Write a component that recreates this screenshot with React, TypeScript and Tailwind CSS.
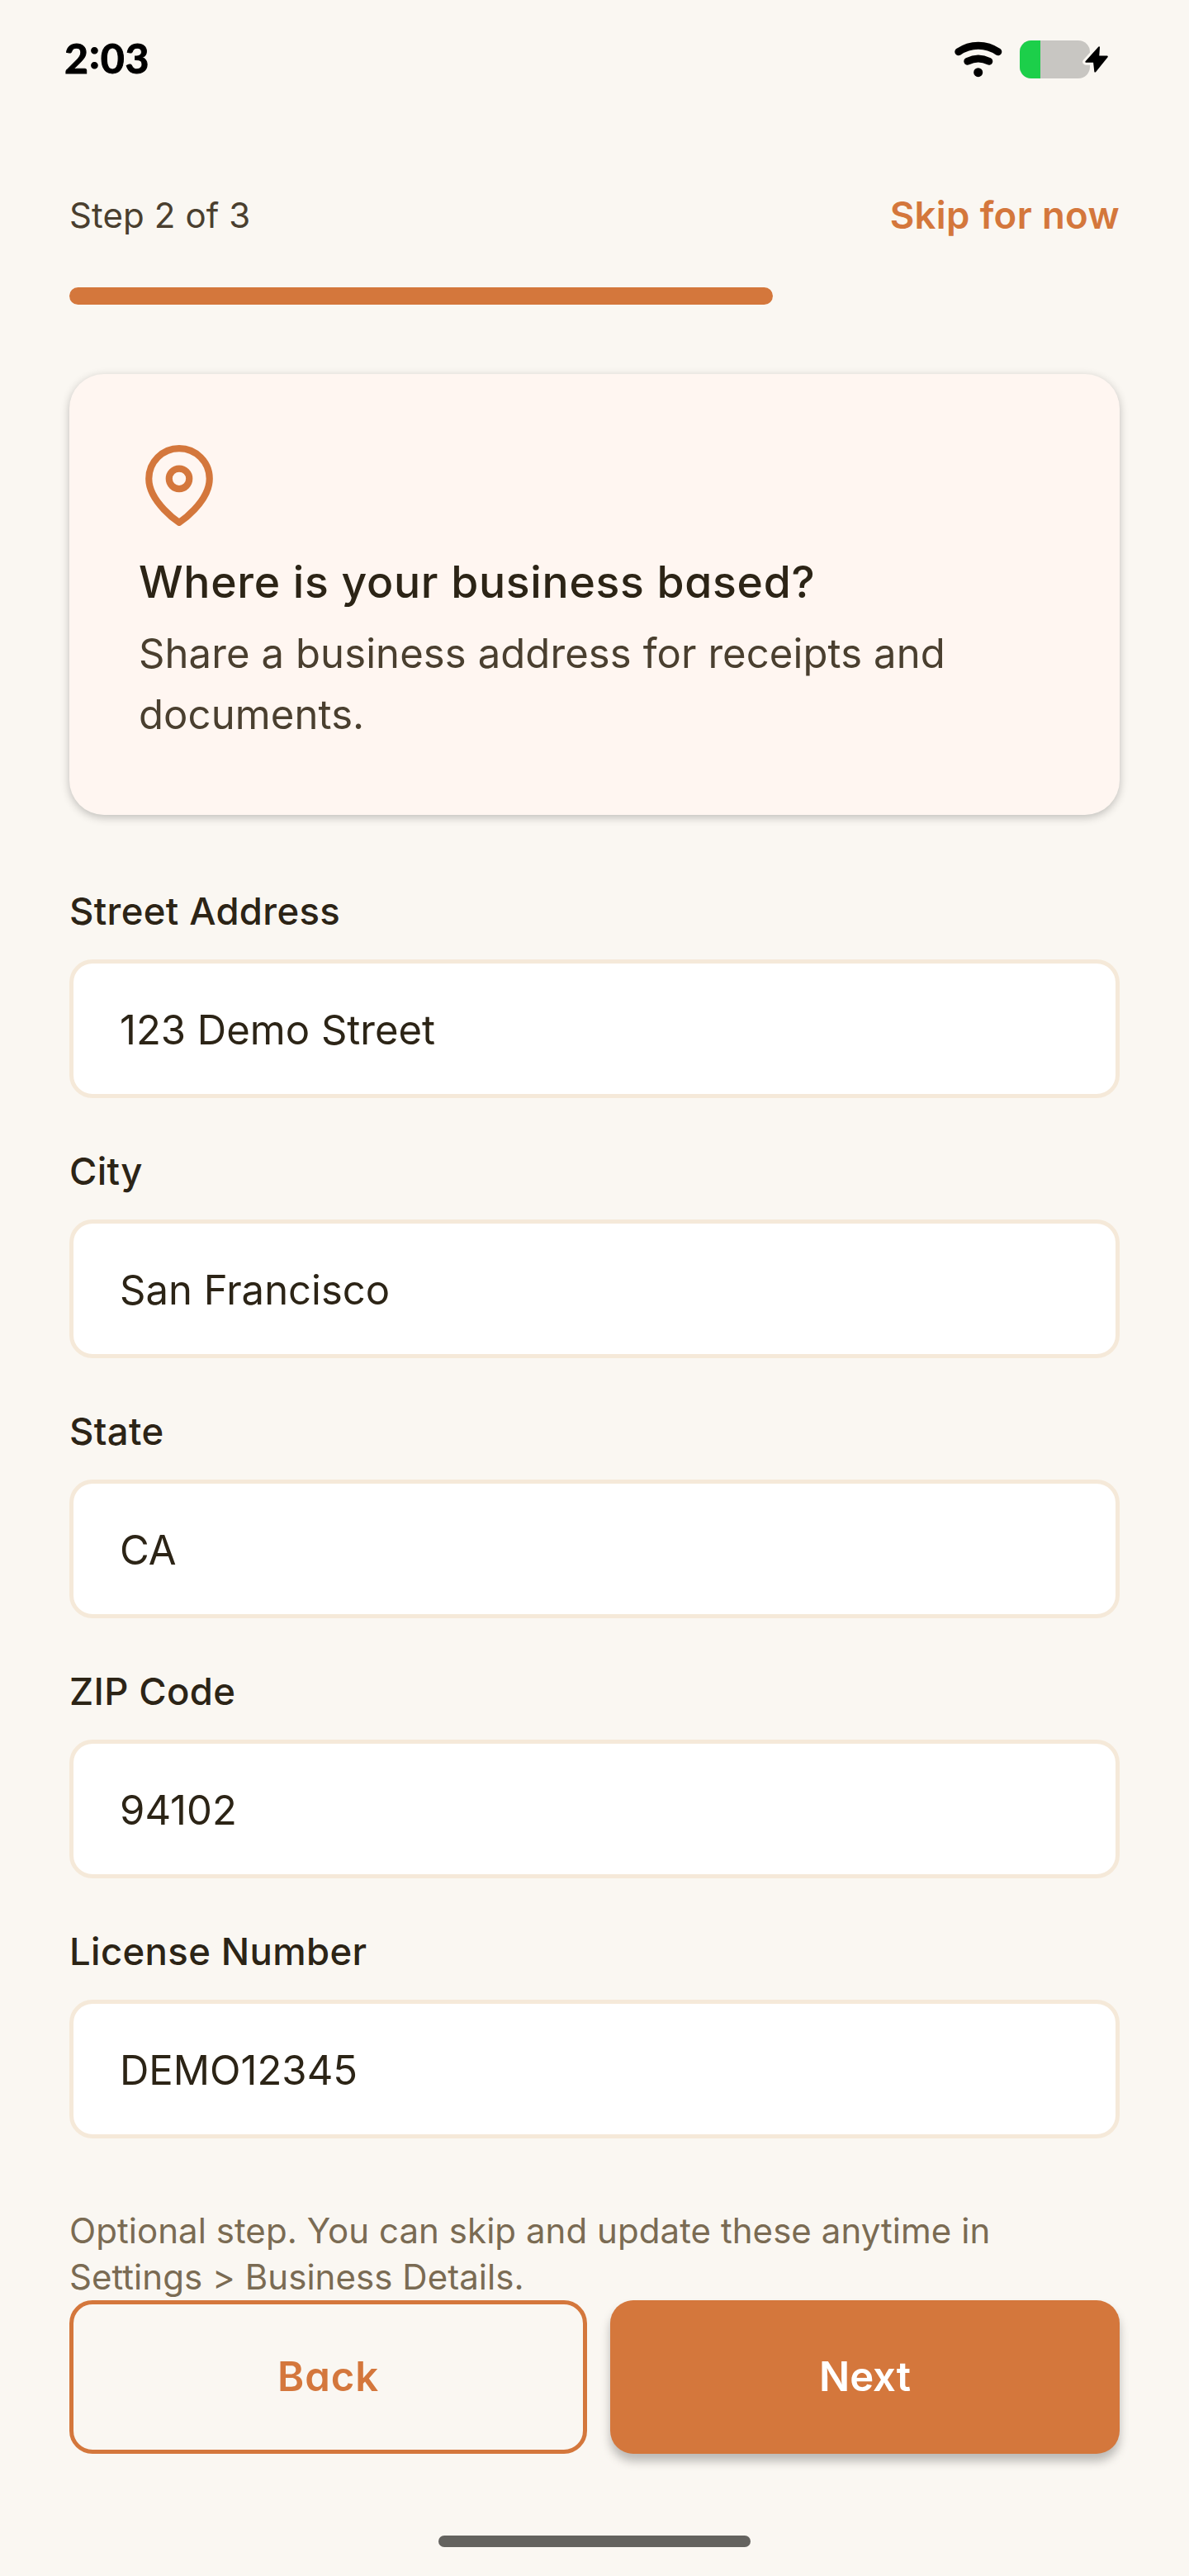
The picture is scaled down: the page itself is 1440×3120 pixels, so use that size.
import { useState } from "react";

const FIELDS = [
  { id: "street", label: "Street Address", value: "123 Demo Street" },
  { id: "city", label: "City", value: "San Francisco" },
  { id: "state", label: "State", value: "CA" },
  { id: "zip", label: "ZIP Code", value: "94102" },
  { id: "license", label: "License Number", value: "DEMO12345" },
];

const BOLT = "M96 8.3L80.3 25.8H90L91.3 37.6L105.8 19.6H95.2Z";

function WifiIcon() {
  return (
    <svg width="58" height="44" viewBox="0 0 58 44" fill="none" stroke="#000" strokeLinecap="round">
      <path d="M4.8 12.8C19.3 2.7 38.3 2.7 52.8 12.8" strokeWidth="9" />
      <path d="M15.8 24.2C24.3 20 33.3 20 41.8 24.2" strokeWidth="9" />
      <circle cx="28.7" cy="37.7" r="5.5" fill="#000" stroke="none" />
    </svg>
  );
}

function BatteryIcon() {
  return (
    <svg width="110" height="46" viewBox="0 0 110 46">
      <rect width="85" height="46" rx="14" fill="#c8c6c2" />
      <path d="M14 0H25V46H14a14 14 0 0 1-14-14V14a14 14 0 0 1 14-14z" fill="#1ccf4a" />
      {/* gap between the bolt and the battery body */}
      <path d={BOLT} fill="#faf7f2" stroke="#faf7f2" strokeWidth="8" strokeLinejoin="round" />
      <path d={BOLT} fill="#000" stroke="#000" strokeWidth="2" strokeLinejoin="round" />
    </svg>
  );
}

function PinIcon() {
  return (
    <svg
      width="98"
      height="98"
      viewBox="0 0 24 24"
      fill="none"
      stroke="#d4773c"
      strokeWidth="2"
      strokeLinecap="round"
      strokeLinejoin="round"
    >
      <path d="M21 10c0 7-9 13-9 13s-9-6-9-13a9 9 0 0 1 18 0z" />
      <circle cx="12" cy="10" r="3" />
    </svg>
  );
}

function Field({ id, label, initial }: { id: string; label: string; initial: string }) {
  const [value, setValue] = useState(initial);

  return (
    <div className="flex flex-col gap-[27px]">
      <label htmlFor={id} className="text-[45.5px] leading-[63px] font-medium tracking-[0.35px]">
        {label}
      </label>
      <input
        id={id}
        value={value}
        onChange={(e) => setValue(e.target.value)}
        className="h-[168px] w-full rounded-[28px] border-[5px] border-[#f5e9d9] bg-white px-14 pt-0.5 text-[49px] outline-none"
      />
    </div>
  );
}

export default function App() {
  return (
    <div className="flex h-[3120px] w-[1440px] flex-col bg-[#faf7f2] font-['Inter',sans-serif] text-[#2c2416]">
      <header className="flex h-36 items-center justify-between pr-[95px] pl-[78px]">
        <span className="flex pb-1 font-['Lato',sans-serif] text-[50px] leading-none font-bold tracking-[0.9px] text-black [-webkit-text-stroke:1px_#000]">
          2<span className="-mt-1.5">:</span>03
        </span>
        <div className="flex items-center gap-[21px]">
          <WifiIcon />
          <BatteryIcon />
        </div>
      </header>

      <main className="flex flex-col px-[84px] pt-[85px]">
        <div className="flex h-16 items-center justify-between">
          <span className="text-[42px] leading-14 tracking-[0.1px] text-[#4a3f2f]">Step 2 of 3</span>
          <button type="button" className="text-[45.5px] leading-16 font-semibold tracking-[0.35px] text-[#d4773c]">
            Skip for now
          </button>
        </div>

        <div className="mt-[55px] h-[21px] w-[852px] rounded-full bg-[#d4773c]" />

        <section className="mt-[84px] flex h-[534px] flex-col rounded-[42px] bg-[#fff6f1] px-[84px] pt-[86px] shadow-[0_3px_11px_rgba(0,0,0,0.24)]">
          <PinIcon />
          <h1 className="mt-[33px] text-[53.5px] leading-[70px] font-medium tracking-[0.7px] whitespace-nowrap [font-feature-settings:'cv11']">
            Where is your business based?
          </h1>
          <p className="mt-[15px] text-[49px] leading-[74px] tracking-[0.1px] text-[#4a3f2f]">
            Share a business address for receipts and documents.
          </p>
        </section>

        <form className="mt-[85px] flex flex-col gap-[57px]">
          {FIELDS.map((f) => (
            <Field key={f.id} id={f.id} label={f.label} initial={f.value} />
          ))}
        </form>

        <p className="mt-[84px] pr-16 text-[42px] leading-14 tracking-[0.05px] text-[#7a6b53]">
          Optional step. You can skip and update these anytime in Settings &gt; Business Details.
        </p>

        <div className="flex h-[186px] gap-7 text-[49px] font-semibold [font-feature-settings:'cv11']">
          <button
            type="button"
            className="w-[627px] rounded-[28px] border-[5px] border-[#d4773c] tracking-[0.9px] text-[#d4773c]"
          >
            Back
          </button>
          <button
            type="button"
            className="flex-1 rounded-[28px] bg-[#d4773c] text-white shadow-[0_9px_12px_rgba(0,0,0,0.25)]"
          >
            Next
          </button>
        </div>
      </main>

      <div className="mt-[99px] h-3.5 w-[378px] self-center rounded-full bg-[#64635f]" />
    </div>
  );
}
